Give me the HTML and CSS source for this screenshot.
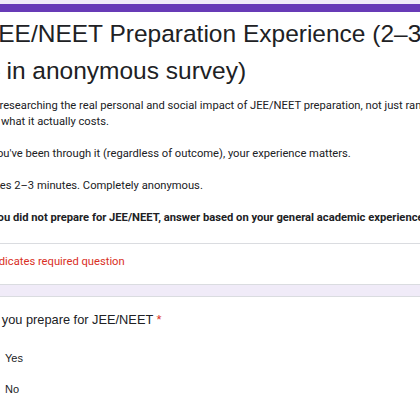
FILE: index.html
```html
<!DOCTYPE html>
<html lang="en">
<head>
<meta charset="utf-8">
<title>JEE/NEET Preparation Experience</title>
<link rel="stylesheet" href="styles.css">
</head>
<body>
<div class="form">
  <div class="card header">
    <div class="header-body">
      <h1 class="title">JEE/NEET Preparation Experience (2–3 min<br>– in anonymous survey)</h1>
      <div class="desc">
        <p>I'm researching the real personal and social impact of JEE/NEET preparation, not just ranks,<br>but what it actually costs.</p>
        <p>If you've been through it (regardless of outcome), your experience matters.</p>
        <p>Takes 2–3 minutes. Completely anonymous.</p>
        <p class="strong">If you did not prepare for JEE/NEET, answer based on your general academic experience.</p>
      </div>
    </div>
    <div class="required-note">* Indicates required question</div>
  </div>
  <div class="card question">
    <div class="q-title">Did you prepare for JEE/NEET <span class="star">*</span></div>
    <div class="options">
      <label class="option"><span class="radio"></span><span class="opt-label">Yes</span></label>
      <label class="option"><span class="radio"></span><span class="opt-label">No</span></label>
    </div>
  </div>
</div>
</body>
</html>
```

FILE: styles.css
```css
html, body {
  margin: 0;
  padding: 0;
  background: #f0ebf8;
  overflow: hidden;
  width: 420px;
  height: 420px;
}

.form {
  margin-left: -37px;
  width: 540px;
  padding-top: 4px;
  display: flex;
  flex-direction: column;
  gap: 11px;
}

.card {
  background: #ffffff;
  border: 1px solid #dadce0;
  border-radius: 7px;
}

.header {
  border-top: 8px solid #673ab7;
}

.header-body {
  padding: 3px 19px 17px 18px;
}

.title {
  margin: 0 0 0 4px;
  font-family: "Liberation Sans", Arial, sans-serif;
  font-weight: 400;
  font-size: 24.5px;
  line-height: 37px;
  color: #202124;
  white-space: nowrap;
}

.desc {
  margin-top: 9px;
  font-family: Roboto, "Liberation Sans", sans-serif;
  font-size: 11.2px;
  line-height: 16px;
  color: #202124;
  white-space: nowrap;
}

.desc p {
  margin: 0 0 16px 0;
}

.desc p:last-child {
  margin-bottom: 0;
}

.desc .strong {
  font-weight: 700;
}

.required-note {
  border-top: 1px solid #dadce0;
  padding: 10px 18px 14px 18px;
  font-family: Roboto, "Liberation Sans", sans-serif;
  font-size: 11.2px;
  line-height: 16px;
  color: #d93025;
}

.question {
  padding: 13px 19px 20px 15px;
  height: 200px;
}

.q-title {
  font-family: "Liberation Sans", Arial, sans-serif;
  font-size: 12.8px;
  line-height: 20px;
  color: #202124;
}

.star {
  color: #d93025;
}

.options {
  margin-top: 18px;
  display: flex;
  flex-direction: column;
  gap: 11px;
}

.option {
  display: flex;
  align-items: center;
  gap: 10px;
  height: 20px;
}

.radio {
  width: 12px;
  height: 12px;
  border: 2px solid #5f6368;
  border-radius: 50%;
  flex: none;
}

.opt-label {
  font-family: "Liberation Sans", Arial, sans-serif;
  font-size: 11px;
  color: #202124;
}
```
